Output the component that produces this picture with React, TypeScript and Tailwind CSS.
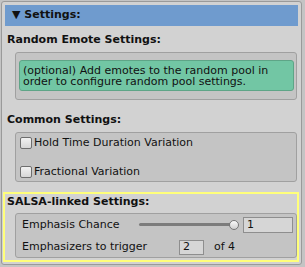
import React from 'react'

function Checkbox() {
  return (
    <span className="block h-3 w-3 shrink-0 rounded-[2px] border border-[#6e6e6e] bg-gradient-to-b from-[#f2f2f2] to-[#d6d6d6]" />
  )
}

export default function App() {
  const font = { fontFamily: '"DejaVu Sans", Verdana, sans-serif' }

  return (
    <div className="h-[267px] w-[305px] bg-[#c4c4c4] pl-px pt-px text-[11px] text-[#111]" style={font}>
      <div className="h-[264px] w-[301px] rounded-[3px] border border-[#9a9a9a] bg-[#d2d2d2]">
        {/* header */}
        <div className="ml-[3px] mt-[3px] flex h-[21px] w-[293px] items-center bg-[#6f9bce] pl-[7px] font-bold">
          ▼ Settings:
        </div>

        {/* random emote */}
        <div className="ml-[5px] mt-[7px] font-bold leading-[14px]">Random Emote Settings:</div>
        <div className="ml-[13px] mt-[5px] w-[282px] rounded-[3px] border border-[#a0a0a0] bg-[#c4c4c4] pb-[8px] pl-[3px] pt-[7px]">
          <div className="w-[275px] rounded-[3px] border border-[#5ea587] bg-[#72c6a4] px-[3px] pb-[3px] pt-[4px] leading-[11px]">
            (optional) Add emotes to the random pool in order to configure random pool settings.
          </div>
        </div>

        {/* common */}
        <div className="ml-[5px] mt-[13px] font-bold leading-[14px]">Common Settings:</div>
        <div className="ml-[13px] mt-[5px] flex h-[50px] w-[282px] flex-col gap-[17px] rounded-[3px] border border-[#a0a0a0] bg-[#c4c4c4] pl-[4px] pt-[4px]">
          <div className="flex items-center gap-[2px] leading-[12px]">
            <Checkbox />
            Hold Time Duration Variation
          </div>
          <div className="flex items-center gap-[2px] leading-[12px]">
            <Checkbox />
            Fractional Variation
          </div>
        </div>

        {/* salsa-linked */}
        <div className="ml-px mt-[10px] h-[70px] w-[296px] border-2 border-[#ffff7a] pl-[2px] pt-px">
          <div className="font-bold leading-[14px]">SALSA-linked Settings:</div>
          <div className="ml-[8px] mt-[4px] flex h-[45px] w-[282px] flex-col gap-[7px] rounded-[3px] border border-[#a0a0a0] bg-[#c4c4c4] pl-[6px] pt-[3px]">
            <div className="flex h-[16px] items-center">
              <span className="w-[117px]">Emphasis Chance</span>
              <div className="relative h-[10px] w-[100px]">
                <div className="absolute left-0 right-[4px] top-[3px] h-[3px] rounded-full bg-[#7c7c7c]" />
                <div className="absolute right-0 top-0 h-[10px] w-[10px] rounded-full border border-[#777] bg-gradient-to-b from-[#fafafa] to-[#cfcfcf]" />
              </div>
              <div className="ml-[4px] flex h-[16px] w-[50px] items-center border border-[#8e8e8e] bg-[#d6d6d6] pl-[3px]">1</div>
            </div>
            <div className="flex h-[15px] items-center">
              <span className="w-[157px]">Emphasizers to trigger</span>
              <div className="flex h-[15px] w-[25px] items-center border border-[#8e8e8e] bg-[#d6d6d6] pl-[3px]">2</div>
              <span className="ml-[10px]">of 4</span>
            </div>
          </div>
        </div>
      </div>
    </div>
  )
}
